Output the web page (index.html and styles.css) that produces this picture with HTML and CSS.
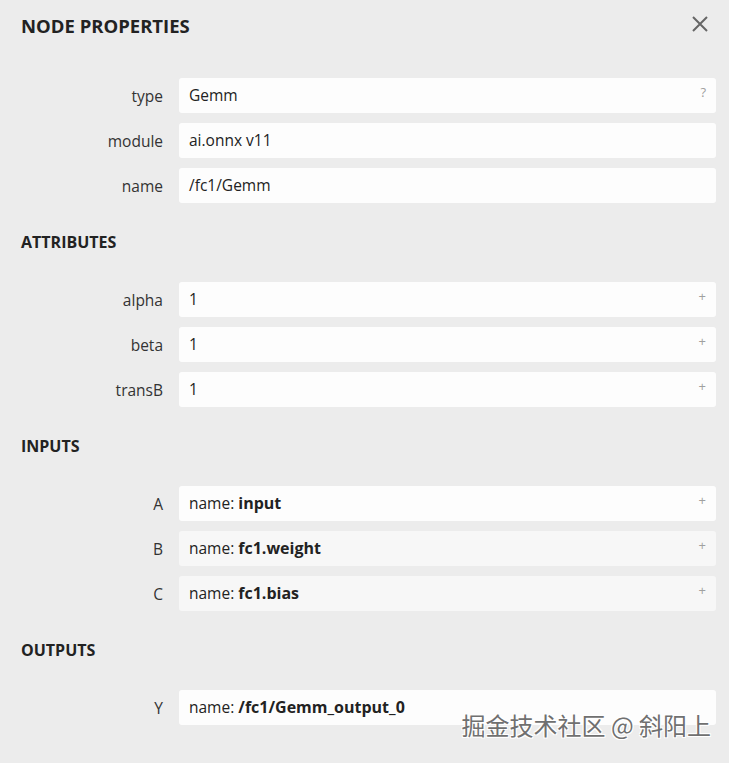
FILE: index.html
```html
<!DOCTYPE html>
<html lang="en">
<head>
    <meta charset="UTF-8">
    <title>Node Properties</title>
    <link rel="stylesheet" href="styles.css">
</head>
<body>
    <div class="sidebar">
        <div class="sidebar-header">
            <h1 class="sidebar-title">NODE PROPERTIES</h1>
            <svg class="sidebar-close" width="16" height="16" viewBox="0 0 16 16">
                <path d="M1 1 L15 15 M15 1 L1 15" stroke="#666" stroke-width="2" fill="none"/>
            </svg>
        </div>

        <div class="rows first">
            <div class="row">
                <div class="row-name">type</div>
                <div class="row-value">Gemm<span class="row-toggle">?</span></div>
            </div>
            <div class="row">
                <div class="row-name">module</div>
                <div class="row-value">ai.onnx v11</div>
            </div>
            <div class="row">
                <div class="row-name">name</div>
                <div class="row-value">/fc1/Gemm</div>
            </div>
        </div>

        <h2 class="section-title">ATTRIBUTES</h2>
        <div class="rows">
            <div class="row">
                <div class="row-name">alpha</div>
                <div class="row-value">1<span class="row-toggle">+</span></div>
            </div>
            <div class="row">
                <div class="row-name">beta</div>
                <div class="row-value">1<span class="row-toggle">+</span></div>
            </div>
            <div class="row">
                <div class="row-name">transB</div>
                <div class="row-value">1<span class="row-toggle">+</span></div>
            </div>
        </div>

        <h2 class="section-title">INPUTS</h2>
        <div class="rows">
            <div class="row">
                <div class="row-name">A</div>
                <div class="row-value">name: <b>input</b><span class="row-toggle">+</span></div>
            </div>
            <div class="row">
                <div class="row-name">B</div>
                <div class="row-value initializer">name: <b>fc1.weight</b><span class="row-toggle">+</span></div>
            </div>
            <div class="row">
                <div class="row-name">C</div>
                <div class="row-value initializer">name: <b>fc1.bias</b><span class="row-toggle">+</span></div>
            </div>
        </div>

        <h2 class="section-title">OUTPUTS</h2>
        <div class="rows">
            <div class="row">
                <div class="row-name">Y</div>
                <div class="row-value">name: <b>/fc1/Gemm_output_0</b></div>
            </div>
        </div>
    </div>

    <div class="watermark">掘金技术社区 @ 斜阳上</div>
</body>
</html>
```

FILE: styles.css
```css
* {
    margin: 0;
    padding: 0;
    box-sizing: border-box;
}

body {
    font-family: 'Open Sans', 'Noto Sans', 'Noto Sans CJK SC', sans-serif;
    font-size: 15.5px;
    color: #333;
    background-color: #ececec;
    min-height: 100vh;
    position: relative;
    overflow: hidden;
}

.sidebar {
    padding: 0 13px 0 0;
}

.sidebar-header {
    height: 50px;
    display: flex;
    align-items: center;
    justify-content: space-between;
    padding-left: 21px;
    padding-right: 8px;
}

.sidebar-title {
    font-size: 18.5px;
    font-weight: 700;
    color: #222;
}

.sidebar-close {
    display: block;
    margin-top: -2px;
}

.rows {
    display: flex;
    flex-direction: column;
    gap: 10px;
    margin-top: 28px;
}

.row {
    display: grid;
    grid-template-columns: 163px 1fr;
    column-gap: 16px;
    align-items: center;
}

.row-name {
    text-align: right;
    color: #333;
}

.row-value {
    position: relative;
    height: 35px;
    line-height: 35px;
    padding: 0 10px;
    background-color: #fdfdfd;
    border-radius: 3px;
    color: #222;
}

.row-value.initializer {
    background-color: #f7f7f7;
}

.row-value b {
    font-size: 16px;
    font-weight: 700;
}

.row-toggle {
    position: absolute;
    right: 10px;
    top: 1px;
    line-height: 26px;
    font-size: 13px;
    color: #a0a0a0;
}

.section-title {
    font-size: 16px;
    font-weight: 700;
    color: #222;
    line-height: 24px;
    padding-left: 21px;
    margin-top: 27px;
}

.section-title + .rows {
    margin-top: 28px;
}

.watermark {
    position: absolute;
    right: 18px;
    bottom: 21px;
    font-family: 'Noto Sans CJK SC', sans-serif;
    font-size: 24px;
    color: #707070;
    text-shadow: 1px 1px 0 #fff, -1px -1px 0 #fff, 1px -1px 0 #fff, -1px 1px 0 #fff;
}
```
